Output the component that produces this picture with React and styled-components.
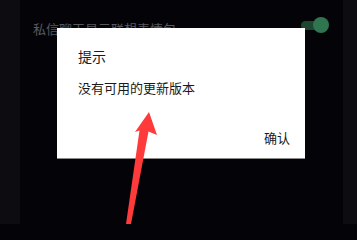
import React from 'react';
import styled, { createGlobalStyle } from 'styled-components';

const GlobalStyle = createGlobalStyle`
  html, body {
    margin: 0;
    padding: 0;
    background: #040408;
  }
  body {
    font-family: "Noto Sans CJK SC", "Noto Sans", sans-serif;
  }
`;

const Screen = styled.div`
  position: relative;
  width: 357px;
  height: 224px;
  overflow: hidden;
  display: flex;
`;

const SideStrip = styled.div`
  width: ${(p) => p.$w}px;
  flex-shrink: 0;
  background: #0d0c10;
`;

const Content = styled.div`
  flex: 1;
  background: #040408;
  display: flex;
  flex-direction: column;
`;

const SettingRow = styled.div`
  display: flex;
  align-items: center;
  justify-content: space-between;
  height: 30px;
  margin-top: 10px;
  padding: 0 14px 0 13px;
`;

const SettingLabel = styled.span`
  padding-top: 7px;
  font-size: 13px;
  line-height: 17px;
  color: #58585c;
`;

const Toggle = styled.div`
  position: relative;
  width: 29px;
  height: 16px;
  display: flex;
  align-items: center;
`;

const Track = styled.div`
  width: 24px;
  height: 9px;
  margin-left: 1px;
  border-radius: 5px;
  background: #1c4630;
`;

const Thumb = styled.div`
  position: absolute;
  right: 0;
  top: 0;
  width: 16px;
  height: 16px;
  border-radius: 50%;
  background: #2e7550;
`;

const Dialog = styled.div`
  position: absolute;
  left: 57px;
  top: 28px;
  width: 248px;
  height: 130px;
  background: #fff;
  border-bottom: 1px solid #8a8a8a;
  display: flex;
  flex-direction: column;
`;

const Title = styled.div`
  padding: 19px 21px 0;
  font-size: 14px;
  line-height: 18px;
  color: #1a1a1a;
`;

const Message = styled.div`
  margin-top: 14px;
  padding: 0 21px;
  font-size: 13px;
  line-height: 17px;
  color: #1a1a1a;
`;

const Actions = styled.div`
  margin-top: auto;
  padding: 0 15px 12px;
  display: flex;
  justify-content: flex-end;
`;

const ActionButton = styled.span`
  font-size: 13px;
  line-height: 17px;
  color: #1a1a1a;
`;

const Annotation = styled.svg`
  position: absolute;
  left: 0;
  top: 0;
  pointer-events: none;
`;

export default function App() {
  return (
    <>
      <GlobalStyle />
      <Screen>
        <SideStrip $w={20} />
        <Content>
          <SettingRow>
            <SettingLabel>私信聊天显示联想表情包</SettingLabel>
            <Toggle>
              <Track />
              <Thumb />
            </Toggle>
          </SettingRow>
        </Content>
        <SideStrip $w={14} />

        <Dialog>
          <Title>提示</Title>
          <Message>没有可用的更新版本</Message>
          <Actions>
            <ActionButton>确认</ActionButton>
          </Actions>
        </Dialog>

        <Annotation width="357" height="224" viewBox="0 0 357 224">
          <polygon
            points="149,112 157,135 148.5,131.5 131,224 126,224 139.5,130.5 135,132"
            fill="#ff3a3a"
          />
        </Annotation>
      </Screen>
    </>
  );
}
